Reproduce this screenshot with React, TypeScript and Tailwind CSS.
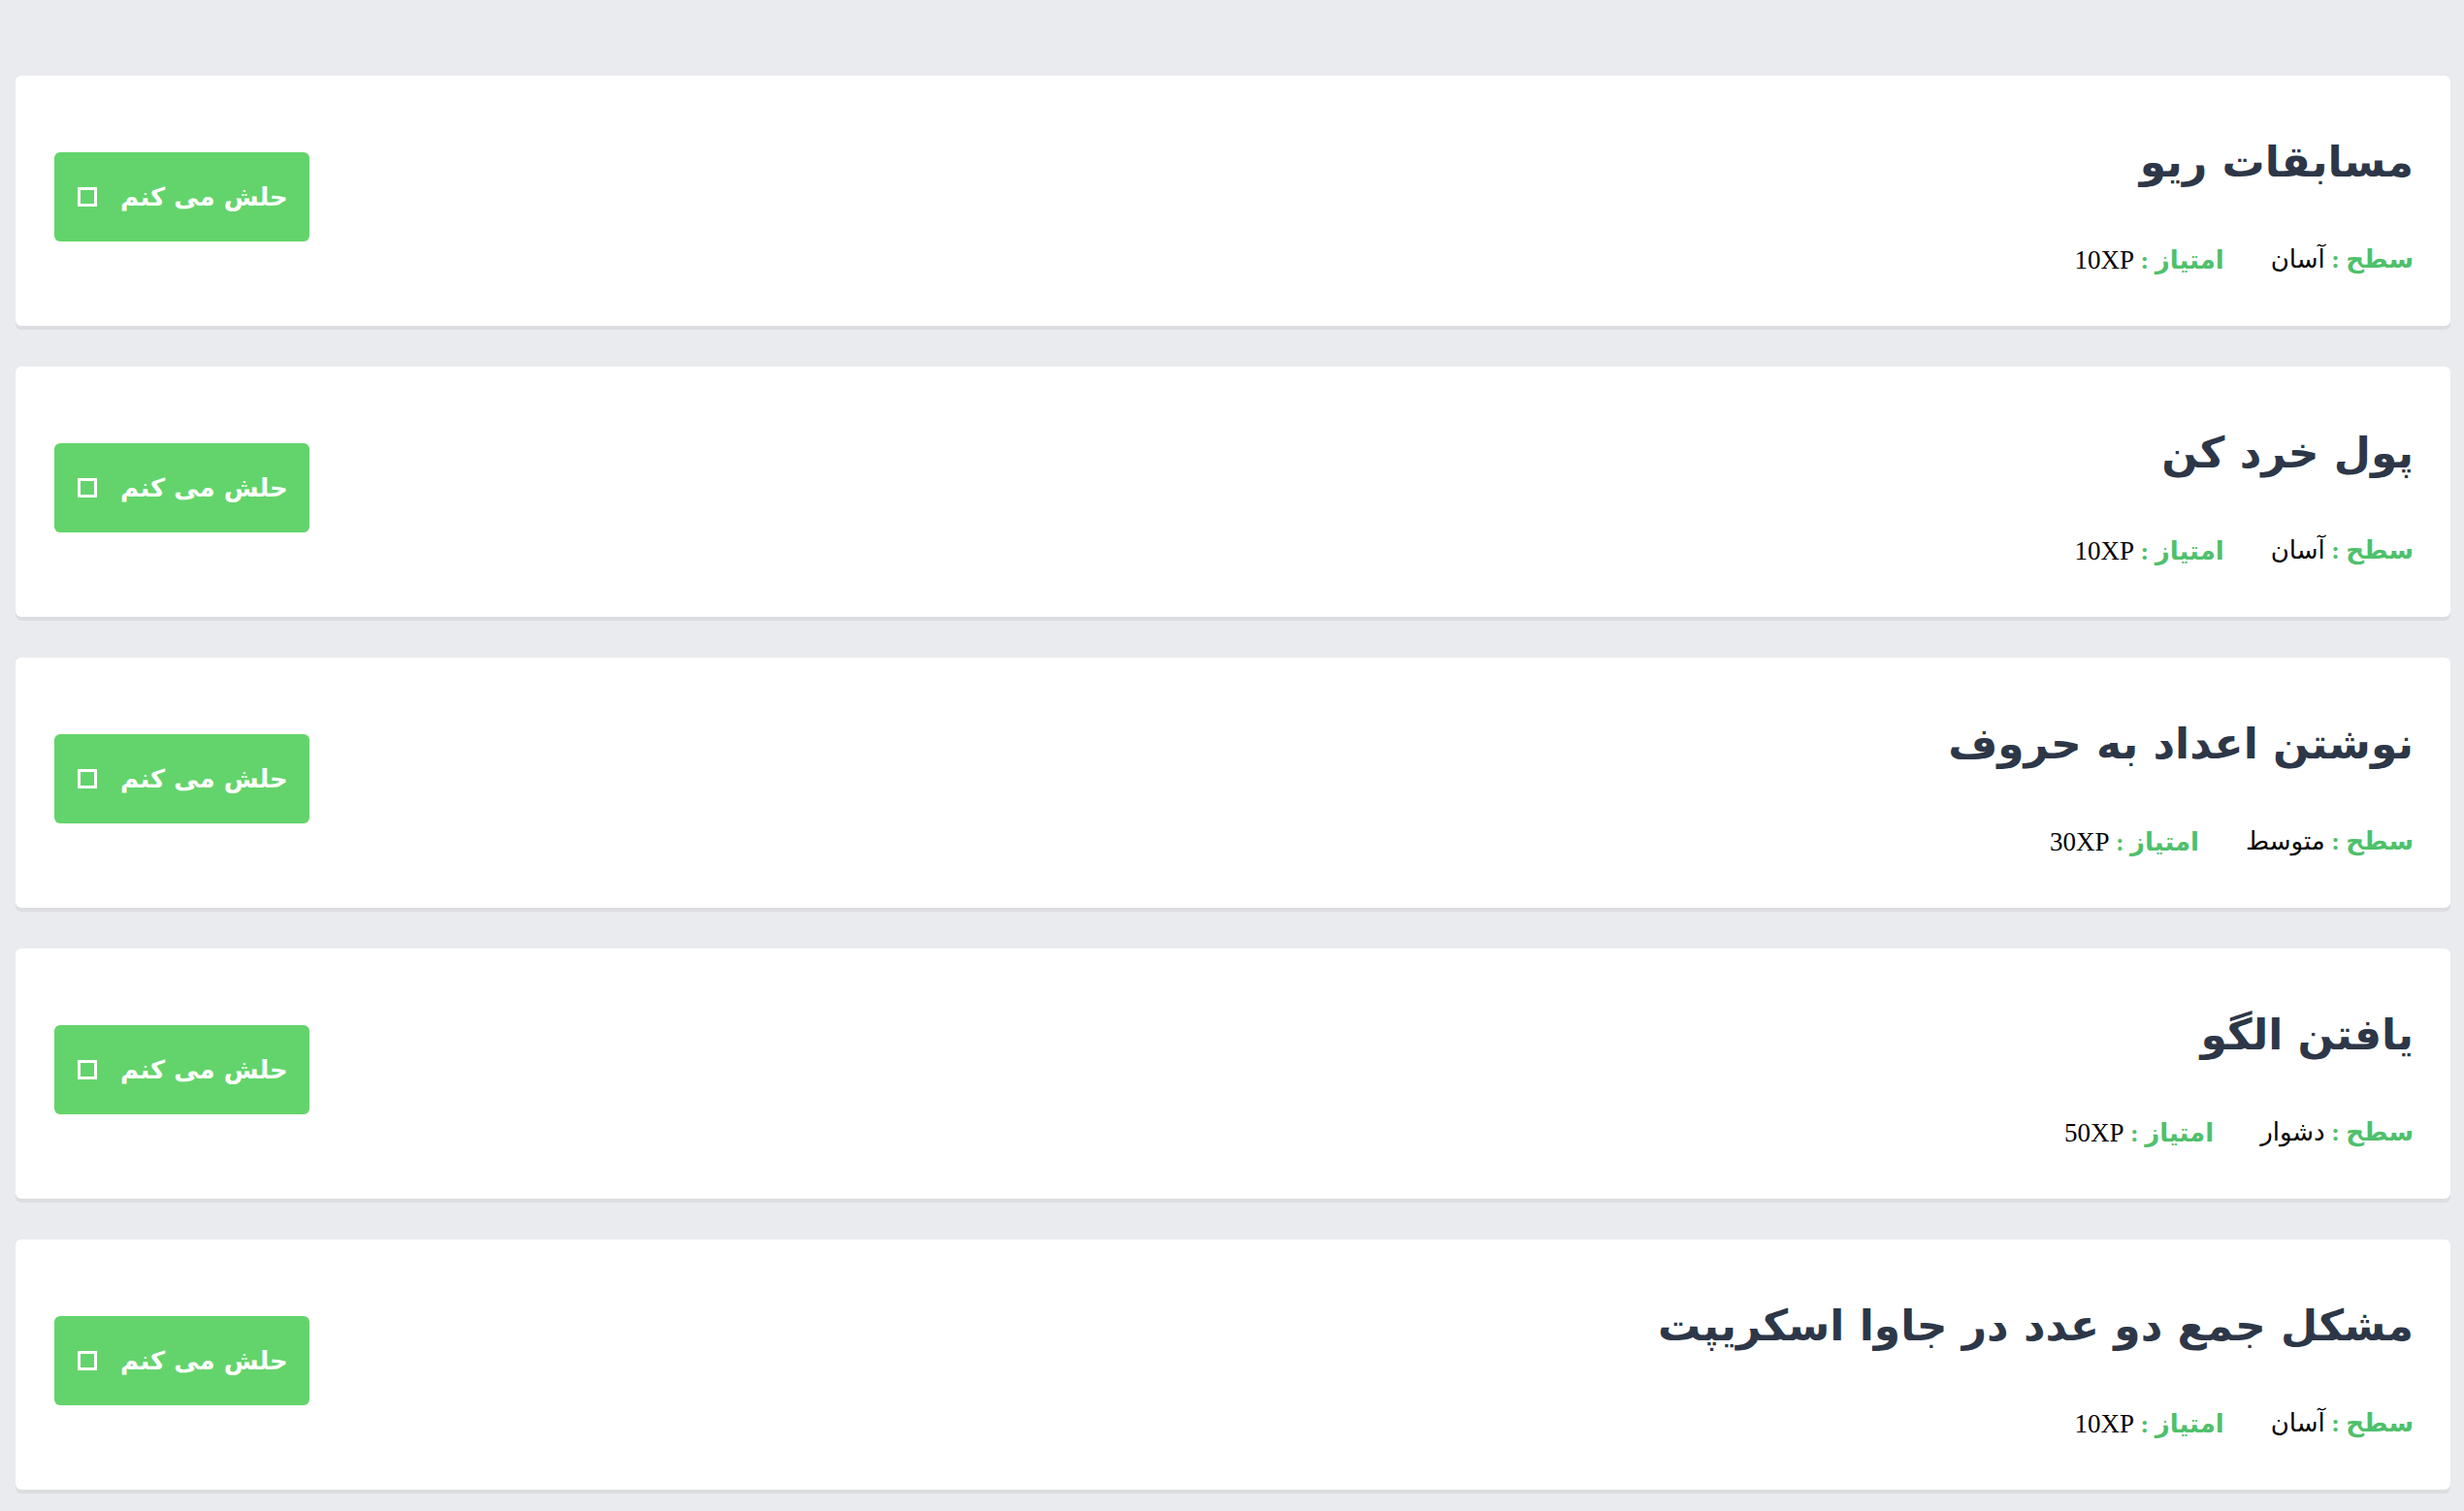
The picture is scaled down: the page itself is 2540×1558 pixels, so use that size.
import React from "react";

const challenges = [
  { title: "مسابقات ریو", level: "آسان", xp: "10XP" },
  { title: "پول خرد کن", level: "آسان", xp: "10XP" },
  { title: "نوشتن اعداد به حروف", level: "متوسط", xp: "30XP" },
  { title: "یافتن الگو", level: "دشوار", xp: "50XP" },
  { title: "مشکل جمع دو عدد در جاوا اسکریپت", level: "آسان", xp: "10XP" },
];

const ChallengeCard = ({ title, level, xp }: { title: string; level: string; xp: string }) => {
  return (
    <div
      dir="rtl"
      className="flex h-[258px] items-center justify-between rounded-md bg-white pl-10 pr-[38px] shadow-[0_4px_0_#dcdde0]"
    >
      {/* Title + meta */}
      <div className="flex flex-col pt-2">
        <h2 className="text-[44px] font-bold leading-[60px] text-[#2d3748] [font-family:'DejaVu_Sans',sans-serif]">
          {title}
        </h2>
        <div className="mt-[55px] flex gap-12 text-[26px] leading-8 text-black [font-family:'Liberation_Serif','DejaVu_Sans',serif]">
          <span>
            <span className="font-bold text-[#4fc06b]">سطح :</span> {level}
          </span>
          <span>
            <span className="font-bold text-[#4fc06b]">امتیاز :</span> <span className="text-[27px]">{xp}</span>
          </span>
        </div>
      </div>

      {/* Solve button */}
      <button className="mb-2 flex h-[92px] items-center gap-6 rounded-md bg-[#63d46c] pl-6 pr-[22px] text-[26px] font-bold text-white [font-family:'DejaVu_Sans',sans-serif]">
        <span>حلش می کنم</span>
        <span className="h-5 w-5 border-[3px] border-white" />
      </button>
    </div>
  );
};

export default function App() {
  return (
    <div className="min-h-screen bg-[#e9ebee] pb-10 pl-4 pr-[14px] pt-[78px]">
      <div className="flex flex-col gap-[42px]">
        {challenges.map((c, i) => (
          <ChallengeCard key={i} {...c} />
        ))}
      </div>
    </div>
  );
}
